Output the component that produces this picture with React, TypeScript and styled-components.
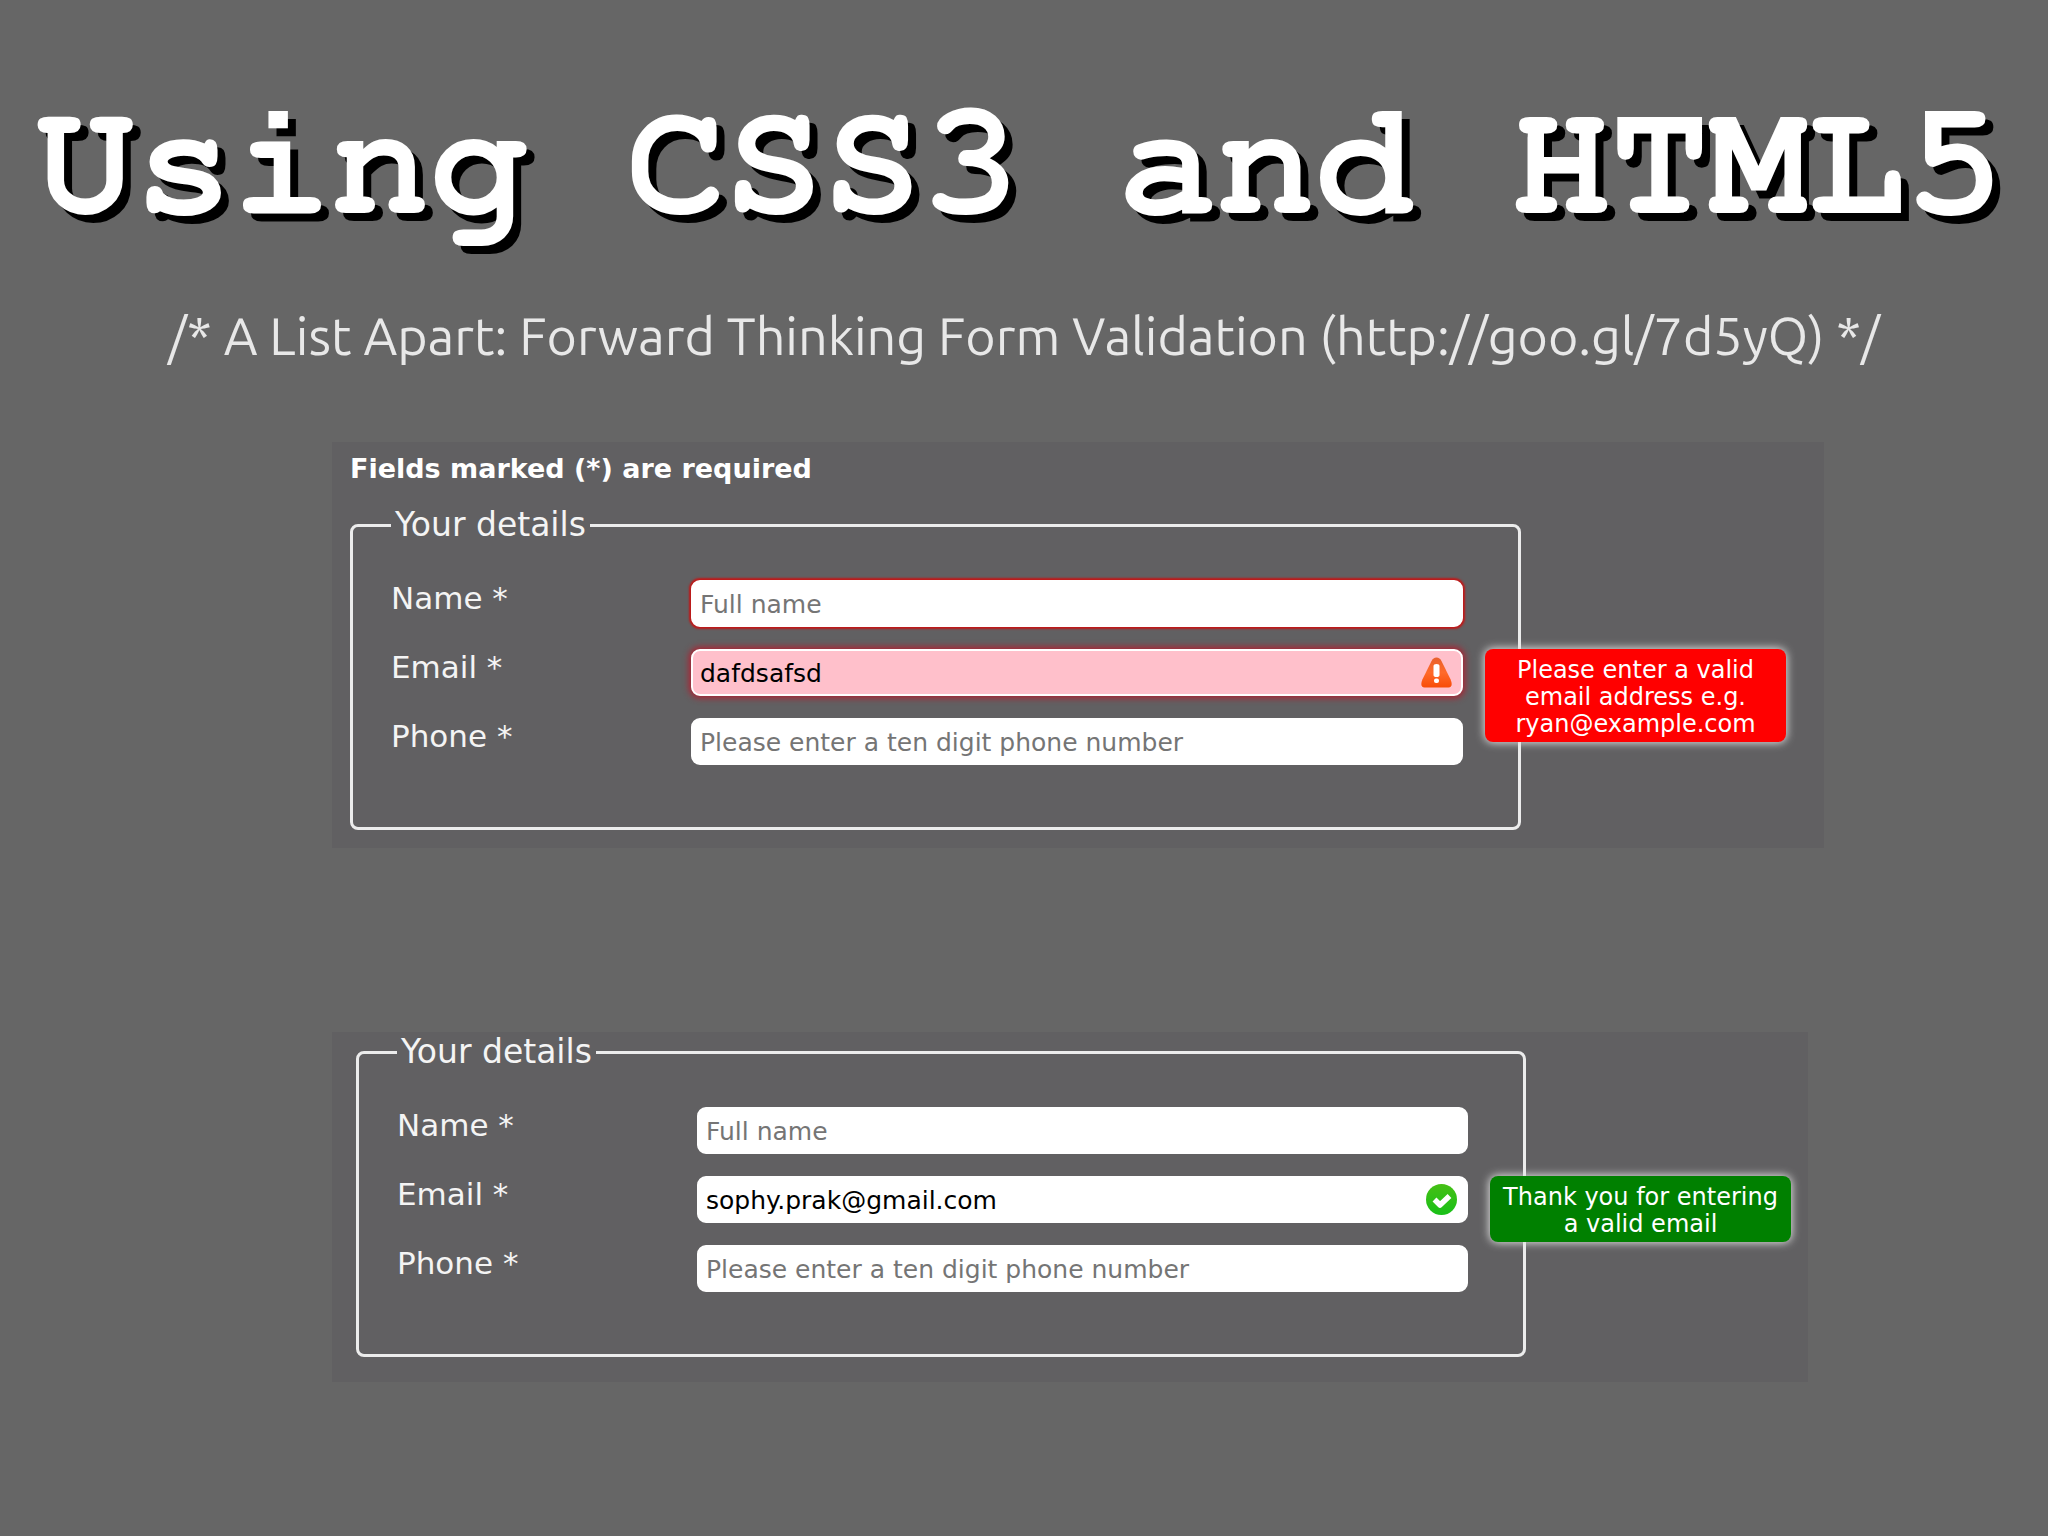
import React, { useId } from "react";
import styled, { createGlobalStyle, css } from "styled-components";

const GlobalStyle = createGlobalStyle`
  *, *::before, *::after { box-sizing: border-box; }
  html { min-height: 100%; background: #666666; }
  body { margin: 0; }
`;

const uiFont = css`
  font-family: Verdana, "DejaVu Sans", sans-serif;
`;

const Slide = styled.main`
  ${uiFont}
  display: flex;
  flex-direction: column;
  padding-bottom: 80px;
  color: #f4f4f4;
`;

const Title = styled.h1`
  margin: 0;
  padding: 72px 8px 0 0;
  font-family: "Courier 10 Pitch", "Nimbus Mono PS", "FreeMono", "Liberation Mono", monospace;
  font-size: 164px;
  font-weight: 700;
  line-height: 184px;
  text-align: center;
  white-space: pre;
  color: #ffffff;
  text-shadow: 8px 8px 0 #000000;
`;

const Subtitle = styled.p`
  margin: 0;
  padding-top: 44px;
  font-family: Ubuntu, "Noto Sans", sans-serif;
  font-size: 52px;
  line-height: 72px;
  text-align: center;
  color: #e8e8e8;
`;

const Examples = styled.div`
  display: flex;
  flex-direction: column;
  gap: 184px;
  padding: 70px 224px 0 332px;
`;

const Panel = styled.form<{ $compact?: boolean }>`
  display: flex;
  flex-direction: column;
  gap: 16px;
  margin-right: ${(p) => (p.$compact ? 16 : 0)}px;
  padding: ${(p) => (p.$compact ? "0 282px 25px 24px" : "7px 303px 18px 18px")};
  background: #616062;
`;

const Note = styled.p`
  margin: 0;
  font-size: 27px;
  font-weight: 700;
  line-height: 40px;
  color: #ffffff;
`;

const Group = styled.fieldset`
  min-width: 0;
  margin: 0;
  padding: 35px 55px 62px 38px;
  border: 3px solid #ececec;
  border-radius: 8px;
`;

const Legend = styled.legend`
  padding: 0 4px;
  font-size: 33px;
  line-height: 40px;
`;

const Rows = styled.div`
  display: flex;
  flex-direction: column;
  gap: 22px;
`;

const Row = styled.div`
  display: grid;
  grid-template-columns: 300px 1fr;
  align-items: start;
`;

const Label = styled.label`
  font-size: 31px;
  line-height: 36px;
`;

type Tone = "plain" | "required" | "invalid";

const tones = {
  plain: css`
    background: #ffffff;
    border-color: #ffffff;
  `,
  required: css`
    background: #ffffff;
    border-color: #ffffff;
    box-shadow: 0 0 2px 2px #c01818;
  `,
  invalid: css`
    background: #ffc0cb;
    border-color: #ffffff;
    box-shadow: 0 0 6px 2px #b02030;
  `,
};

const Control = styled.div`
  position: relative;
`;

const Input = styled.input<{ $tone: Tone }>`
  ${uiFont}
  display: block;
  width: 100%;
  height: 47px;
  padding: 2px 52px 0 7px;
  border: 2px solid;
  border-radius: 9px;
  outline: none;
  font-size: 25px;
  color: #000000;
  ${(p) => tones[p.$tone]}

  &::placeholder {
    color: #757575;
    opacity: 1;
  }
`;

const Badge = styled.svg`
  position: absolute;
  top: 8px;
  right: 11px;
  width: 31px;
  height: 31px;
`;

const Tip = styled.output<{ $color: string }>`
  position: absolute;
  top: 0;
  left: calc(100% + 22px);
  width: 301px;
  padding: 8px 8px 4px;
  border-radius: 8px;
  background: ${(p) => p.$color};
  box-shadow: 0 0 8px 1px #dddddd;
  font-size: 24px;
  line-height: 27px;
  text-align: center;
  white-space: pre-line;
  color: #ffffff;
`;

const WarningIcon = () => (
  <Badge viewBox="0 0 31 31" aria-hidden="true">
    <defs>
      <linearGradient id="warn" x1="0" y1="0" x2="0" y2="1">
        <stop offset="0" stopColor="#e8602c" />
        <stop offset="0.5" stopColor="#ff6a2a" />
        <stop offset="1" stopColor="#f84c08" />
      </linearGradient>
    </defs>
    <path
      d="M15.500 0.500C17.800 0.500 19.300 1.800 20.600 4.200L29.600 22.500C31.500 27 31 30.500 27.500 30.500H3.500C0 30.500-0.500 27 1.400 22.500L10.400 4.200C11.700 1.800 13.200 0.500 15.500 0.500Z"
      fill="url(#warn)"
    />
    <path d="M12.500 9Q12.500 7 15.500 7T18.500 9V18Q18.500 20 15.500 20T12.500 18Z" fill="#fff" />
    <rect x="13" y="21.500" width="5" height="4.500" rx="2" fill="#fff" />
  </Badge>
);

const CheckIcon = () => (
  <Badge viewBox="0 0 31 31" aria-hidden="true">
    <defs>
      <linearGradient id="ok" x1="0" y1="0" x2="0" y2="1">
        <stop offset="0" stopColor="#46c015" />
        <stop offset="1" stopColor="#18c018" />
      </linearGradient>
    </defs>
    <circle cx="15.500" cy="15.500" r="15.500" fill="url(#ok)" />
    <path d="M8.500 15.500L14 21L23.500 12" fill="none" stroke="#fff" strokeWidth="5.500" strokeLinecap="butt" strokeLinejoin="round" />
  </Badge>
);

interface FieldProps {
  label: string;
  type: string;
  tone?: Tone;
  value?: string;
  placeholder?: string;
  icon?: React.ReactNode;
  tip?: { color: string; text: string };
}

function Field({ label, type, tone = "plain", value, placeholder, icon, tip }: FieldProps) {
  const id = useId();
  return (
    <Row>
      <Label htmlFor={id}>{label} *</Label>
      <Control>
        <Input id={id} type={type} $tone={tone} defaultValue={value} placeholder={placeholder} spellCheck={false} />
        {icon}
        {tip && (
          <Tip htmlFor={id} $color={tip.color}>
            {tip.text}
          </Tip>
        )}
      </Control>
    </Row>
  );
}

const phoneHint = "Please enter a ten digit phone number";

export default function App() {
  return (
    <>
      <GlobalStyle />
      <Slide>
        <Title>Using CSS3 and HTML5</Title>
        <Subtitle>/* A List Apart: Forward Thinking Form Validation (http://goo.gl/7d5yQ) */</Subtitle>
        <Examples>
          <Panel noValidate>
            <Note>Fields marked (*) are required</Note>
            <Group>
              <Legend>Your details</Legend>
              <Rows>
                <Field label="Name" type="text" tone="required" placeholder="Full name" />
                <Field
                  label="Email"
                  type="email"
                  tone="invalid"
                  value="dafdsafsd"
                  icon={<WarningIcon />}
                  tip={{ color: "#ff0000", text: "Please enter a valid\nemail address e.g.\nryan@example.com" }}
                />
                <Field label="Phone" type="tel" placeholder={phoneHint} />
              </Rows>
            </Group>
          </Panel>
          <Panel noValidate $compact>
            <Group>
              <Legend>Your details</Legend>
              <Rows>
                <Field label="Name" type="text" placeholder="Full name" />
                <Field
                  label="Email"
                  type="email"
                  value="sophy.prak@gmail.com"
                  icon={<CheckIcon />}
                  tip={{ color: "#008000", text: "Thank you for entering\na valid email" }}
                />
                <Field label="Phone" type="tel" placeholder={phoneHint} />
              </Rows>
            </Group>
          </Panel>
        </Examples>
      </Slide>
    </>
  );
}
